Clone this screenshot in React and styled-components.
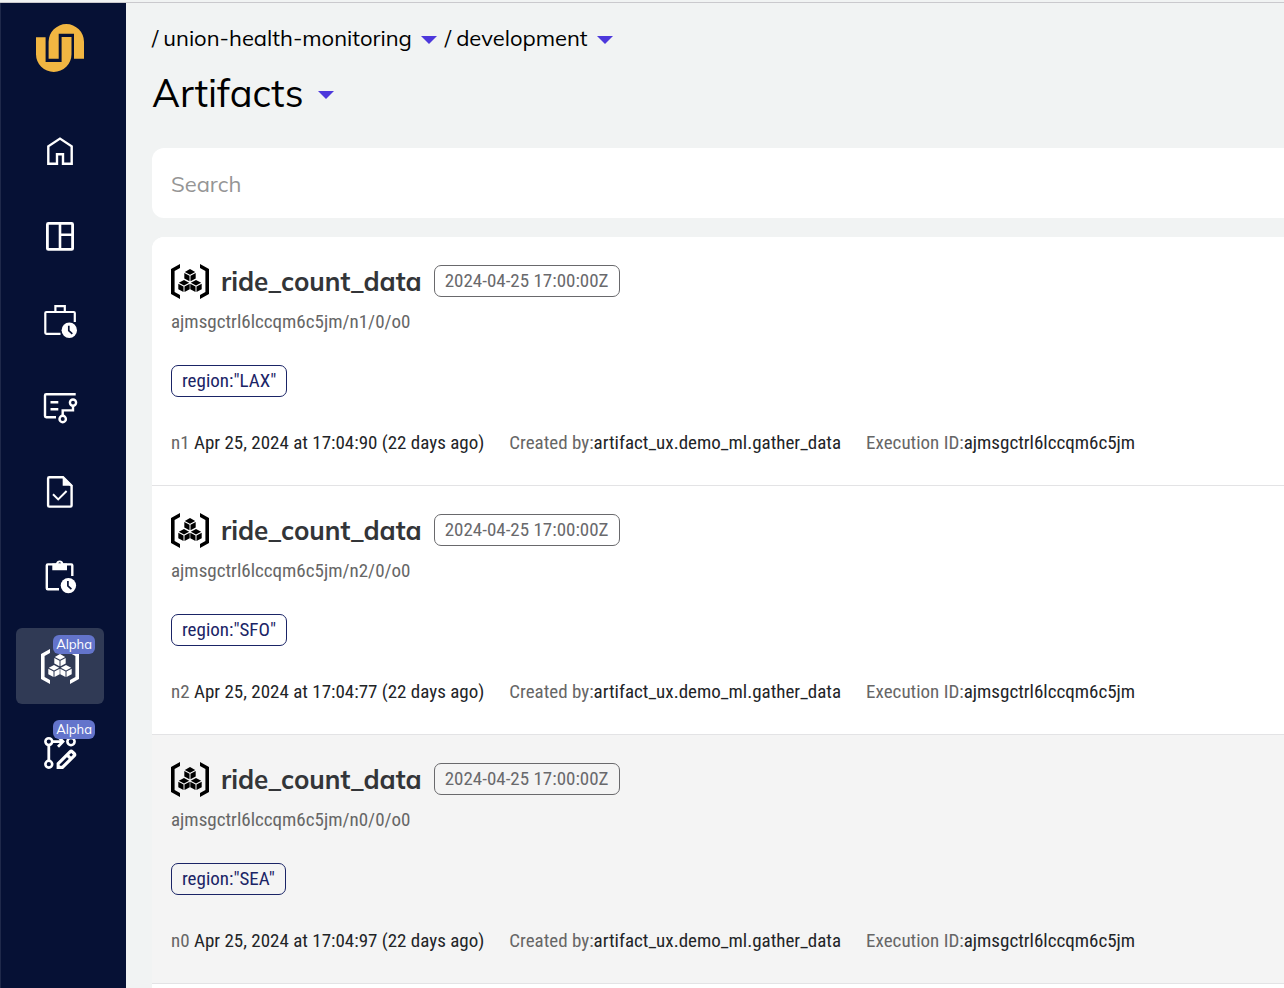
import React from 'react';
import styled, { createGlobalStyle } from 'styled-components';

const display = 'Mulish, Lato, "Open Sans", sans-serif';
const condensed = '"Roboto Condensed", "Liberation Sans Narrow", Roboto, sans-serif';

const GlobalStyle = createGlobalStyle`
  *, *::before, *::after { box-sizing: border-box; }
  body { margin: 0; padding-top: 2px; background: #f1f3f3; color: #000; font-family: ${display}; }
  button, input { font: inherit; color: inherit; }
`;

const Page = styled.div`
  display: flex;
  min-height: calc(100vh - 2px);
  border-top: 1px solid #cac9cd;
`;

const Sidebar = styled.nav`
  flex: none;
  width: 126px;
  display: flex;
  flex-direction: column;
  align-items: center;
  padding: 21px 7px 0 0;
  background: #061135;
  border-left: 1px solid #1f294a;
`;

const LogoLink = styled.a`
  display: block;
  height: 48px;
  margin-bottom: 46px;
`;

const NavList = styled.ul`
  list-style: none;
  margin: 0;
  padding: 0;
  display: flex;
  flex-direction: column;
  gap: 9px;
`;

const NavLink = styled.a`
  position: relative;
  display: flex;
  align-items: center;
  justify-content: center;
  width: 88px;
  height: 76px;
  padding-bottom: ${(p) => (p.$badged ? 0 : 8)}px;
  border-radius: 6px;
  color: #fff;
  background: ${(p) => (p.$active ? '#303a55' : 'transparent')};
`;

const Badge = styled.span`
  position: absolute;
  top: 7px;
  right: 9px;
  padding: 0 3px;
  border-radius: 6px;
  background: #6374cb;
  font-size: 13px;
  line-height: 19px;
`;

const Main = styled.main`
  flex: 1;
  min-width: 0;
  display: flex;
  flex-direction: column;
  padding-left: 26px;
`;

const Breadcrumbs = styled.nav`
  display: flex;
  align-items: center;
  gap: 8px;
  padding-top: 19px;
  font-size: 22px;
  line-height: 32px;
`;

const Crumb = styled.span`
  display: flex;
  align-items: center;
  gap: 5px;
`;

const Picker = styled.button`
  display: flex;
  align-items: center;
  gap: ${(p) => p.$gap || 9}px;
  border: 0;
  padding: 0;
  background: none;
  cursor: pointer;
`;

const CaretIcon = styled.svg`
  margin-top: 4px;
`;

const Title = styled.h1`
  display: flex;
  margin: 14px 0 30px;
  font-size: 38px;
  line-height: 50px;
  font-weight: 400;
`;

const SearchInput = styled.input`
  flex: none;
  width: 100%;
  height: 70px;
  margin-bottom: 19px;
  padding: 2px 19px 0;
  border: 0;
  border-radius: 12px 0 0 12px;
  background: #fff;
  font-size: 22px;
  &::placeholder { color: #959595; opacity: 1; }
`;

const List = styled.ul`
  flex: 1;
  list-style: none;
  margin: 0;
  padding: 0;
  border-radius: 12px 0 0 0;
  background: #fff;
  overflow: hidden;
`;

const Row = styled.li`
  padding: 25px 19px 27px;
  border-bottom: 1px solid #e3e3e5;
  background: ${(p) => (p.$hovered ? '#f4f4f4' : '#fff')};
  font-family: ${condensed};
  font-size: 19px;
  line-height: 30px;
  color: #666;
`;

const RowHead = styled.div`
  display: flex;
  align-items: center;
  gap: 12px;
  height: 38px;
`;

const Icon = styled.span`
  display: flex;
  color: #000;
`;

const Name = styled.h2`
  margin: 0;
  padding-top: 2px;
  font-family: ${display};
  font-size: 26px;
  line-height: 38px;
  font-weight: 700;
  color: #333538;
`;

const Path = styled.div`
  margin: 7px 0 28px;
`;

const Tag = styled.span`
  display: inline-block;
  padding: 0 10px;
  border: 1px solid ${(p) => (p.$navy ? '#1a2466' : '#69696c')};
  border-radius: 7px;
  color: ${(p) => (p.$navy ? '#1a2466' : '#69696c')};
`;

const Tags = styled.div`
  display: flex;
`;

const Facts = styled.div`
  display: flex;
  gap: 25px;
  margin-top: 31px;
  white-space: nowrap;
`;

const Value = styled.span`
  color: #222427;
`;

const Caret = () => (
  <CaretIcon width="16" height="8" viewBox="0 0 16 8" aria-hidden="true">
    <path d="M0 0H16L8 8Z" fill="#4d38dc" />
  </CaretIcon>
);

const Glyph = ({ y, children }) => (
  <svg width="40" height="40" viewBox={`40 ${y} 40 40`} fill="none" stroke="currentColor" strokeWidth="2.4" aria-hidden="true">
    {children}
  </svg>
);

const ArtifactIcon = () => (
  <svg width="38" height="35" viewBox="0 0 38 35" fill="currentColor" aria-hidden="true">
    <path d="M9 0L0 5V30L9 35V31L3.6 28V7L9 4Z" />
    <path d="M29 0L38 5V30L29 35V31L34.4 28V7L29 4Z" />
    {[[19, 11.2], [13, 22], [25, 22]].map(([x, y]) => (
      <g key={x} transform={`translate(${x} ${y})`}>
        <path d="M0 -6.1L5.2 -3.2L0 -.5L-5.2 -3.2Z" />
        <path d="M-5.7 -2.3L-.5 .5V6.1L-5.7 3.2Z" />
        <path d="M5.7 -2.3L.5 .5V6.1L5.7 3.2Z" />
      </g>
    ))}
  </svg>
);

const Clock = ({ x, y }) => (
  <>
    <circle cx={x} cy={y} r="7.7" fill="currentColor" stroke="none" />
    <path d={`M${x - 0.5} ${y - 4.6}V${y + 0.3}L${x + 3} ${y + 3.6}`} stroke="#061135" strokeWidth="1.7" />
  </>
);

const nav = [
  {
    label: 'Home',
    icon: (
      <Glyph y={132}>
        <path d="M48.3 163.7V146.3L60 138.6L71.7 146.3V163.7H63V154.3H57V163.7Z" />
      </Glyph>
    ),
  },
  {
    label: 'Dashboard',
    icon: (
      <Glyph y={217}>
        <rect x="47.4" y="223.4" width="25.2" height="26" rx="1" strokeWidth="2.8" />
        <path d="M60 223V249M60 234.8H72" strokeWidth="2.6" />
      </Glyph>
    ),
  },
  {
    label: 'Executions',
    icon: (
      <Glyph y={302}>
        <path d="M60.5 333.8H46.3a1 1 0 0 1-1-1V313a1 1 0 0 1 1-1H73.8a1 1 0 0 1 1 1V322" strokeWidth="2.2" />
        <path d="M55.4 311.5V306.2H64.8V311.5" strokeWidth="2.2" />
        <Clock x={69.3} y={330.3} />
      </Glyph>
    ),
  },
  {
    label: 'Workflows',
    icon: (
      <Glyph y={387}>
        <path d="M56 417.3H46.2a1.2 1.2 0 0 1-1.2-1.2V395.4a1.2 1.2 0 0 1 1.2-1.2H75.7" />
        <path d="M50.5 402.3H58.3M50.5 409.2H58.3" />
        <circle cx="73" cy="402.6" r="3.1" />
        <circle cx="62.7" cy="419" r="3.2" />
        <path d="M62.7 415.6V410.4H73V406" />
      </Glyph>
    ),
  },
  {
    label: 'Tasks',
    icon: (
      <Glyph y={472}>
        <path d="M49.3 477.2H63L71.6 485.8V505.4a1.2 1.2 0 0 1-1.2 1.2H49.3a1.2 1.2 0 0 1-1.2-1.2V478.4a1.2 1.2 0 0 1 1.2-1.2Z" />
        <path d="M62.7 476.2V485.8H72.7Z" fill="currentColor" stroke="none" />
        <path d="M53 494.3L58.2 499.4L66.6 491" strokeWidth="2" />
      </Glyph>
    ),
  },
  {
    label: 'Launch plans',
    icon: (
      <Glyph y={557}>
        <path d="M59 589.2H47.8a1 1 0 0 1-1-1V565.4a1 1 0 0 1 1-1H71.3a1 1 0 0 1 1 1V576" />
        <path d="M52.3 563.5H56a3.8 3.8 0 0 1 7.4 0H67V570.3H52.3ZM59.7 562.2a1.4 1.4 0 1 0 .01 0Z" fill="currentColor" fillRule="evenodd" stroke="none" />
        <Clock x={68.4} y={585.6} />
      </Glyph>
    ),
  },
  { label: 'Artifacts', badged: true, active: true, icon: <ArtifactIcon /> },
  {
    label: 'Pipeline editor',
    badged: true,
    icon: (
      <Glyph y={731}>
        <circle cx="48.8" cy="741.6" r="3.4" strokeWidth="2.6" />
        <circle cx="48.8" cy="764.2" r="3.4" strokeWidth="2.6" />
        <circle cx="71" cy="741.6" r="3.6" strokeWidth="2.6" />
        <path d="M48.8 745V761M52 741.6H62.5M58 736.5L63 741.6L58 746.8" strokeWidth="2.8" />
        <path d="M58.2 767.4V763.6L70 751.8a1.7 1.7 0 0 1 2.4 0L74.1 753.5a1.7 1.7 0 0 1 0 2.4L62.4 767.4ZM67 754.8L71 758.8" strokeWidth="3.2" />
      </Glyph>
    ),
  },
];

const artifacts = [
  { node: 'n1', region: 'LAX', time: '17:04:90' },
  { node: 'n2', region: 'SFO', time: '17:04:77' },
  { node: 'n0', region: 'SEA', time: '17:04:97', hovered: true },
];

const executionId = 'ajmsgctrl6lccqm6c5jm';

const ArtifactRow = ({ node, region, time, hovered }) => (
  <Row $hovered={hovered}>
    <RowHead>
      <Icon><ArtifactIcon /></Icon>
      <Name>ride_count_data</Name>
      <Tag>2024-04-25 17:00:00Z</Tag>
    </RowHead>
    <Path>{`${executionId}/${node}/0/o0`}</Path>
    <Tags><Tag $navy>{`region:"${region}"`}</Tag></Tags>
    <Facts>
      <span>{node} <Value>{`Apr 25, 2024 at ${time} (22 days ago)`}</Value></span>
      <span>Created by:<Value>artifact_ux.demo_ml.gather_data</Value></span>
      <span>Execution ID:<Value>{executionId}</Value></span>
    </Facts>
  </Row>
);

export default function App() {
  return (
    <Page>
      <GlobalStyle />
      <Sidebar aria-label="Main">
        <LogoLink href="#home" aria-label="Union">
          <svg width="48" height="48" viewBox="36 24 48 48" fill="#f1b642" aria-hidden="true">
            <path d="M36 37.3H45.6V62H61.6V37H71.5V54.2a17.75 17.75 0 0 1-35.5 0Z" />
            <path d="M48.6 58.8V41.8a17.7 17.7 0 0 1 35.4 0V58.8H74V33.8H58.7V58.8Z" />
          </svg>
        </LogoLink>
        <NavList>
          {nav.map(({ label, icon, badged, active }) => (
            <li key={label}>
              <NavLink href="#nav" aria-label={label} $badged={badged} $active={active}>
                {icon}
                {badged && <Badge>Alpha</Badge>}
              </NavLink>
            </li>
          ))}
        </NavList>
      </Sidebar>
      <Main>
        <Breadcrumbs aria-label="Breadcrumb">
          <Crumb>/ <Picker>union-health-monitoring <Caret /></Picker></Crumb>
          <Crumb>/ <Picker>development <Caret /></Picker></Crumb>
        </Breadcrumbs>
        <Title><Picker $gap={14}>Artifacts <Caret /></Picker></Title>
        <SearchInput type="search" placeholder="Search" aria-label="Search" />
        <List>
          {artifacts.map((a) => <ArtifactRow key={a.node} {...a} />)}
        </List>
      </Main>
    </Page>
  );
}
